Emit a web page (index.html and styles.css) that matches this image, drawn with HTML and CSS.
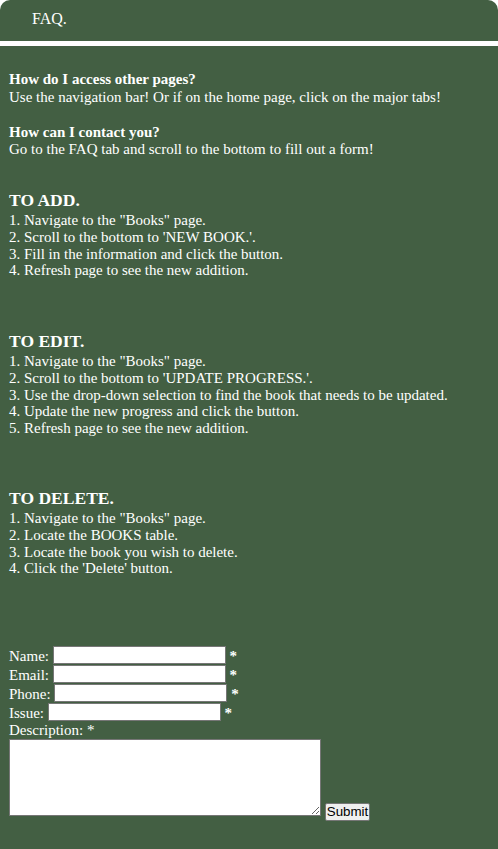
FILE: index.html
```html
<!DOCTYPE html>
<html>
<head>
<meta charset="utf-8">
<title>FAQ</title>
<link rel="stylesheet" href="styles.css">
</head>
<body>
<div class="header">FAQ.</div>
<div class="content">
  <div class="qa">
    <b>How do I access other pages?</b><br>
    Use the navigation bar! Or if on the home page, click on the major tabs!<br>
    <br>
    <b>How can I contact you?</b><br>
    Go to the FAQ tab and scroll to the bottom to fill out a form!
  </div>

  <div class="section add">
    <h3>TO ADD.</h3>
    1. Navigate to the "Books" page.<br>
    2. Scroll to the bottom to 'NEW BOOK.'.<br>
    3. Fill in the information and click the button.<br>
    4. Refresh page to see the new addition.
  </div>

  <div class="section edit">
    <h3>TO EDIT.</h3>
    1. Navigate to the "Books" page.<br>
    2. Scroll to the bottom to 'UPDATE PROGRESS.'.<br>
    3. Use the drop-down selection to find the book that needs to be updated.<br>
    4. Update the new progress and click the button.<br>
    5. Refresh page to see the new addition.
  </div>

  <div class="section delete">
    <h3>TO DELETE.</h3>
    1. Navigate to the "Books" page.<br>
    2. Locate the BOOKS table.<br>
    3. Locate the book you wish to delete.<br>
    4. Click the 'Delete' button.
  </div>

  <form class="contact">
    <div class="row">Name: <input type="text" class="field"> <span class="req">*</span></div>
    <div class="row">Email: <input type="text" class="field"> <span class="req">*</span></div>
    <div class="row">Phone: <input type="text" class="field"> <span class="req">*</span></div>
    <div class="row">Issue: <input type="text" class="field"> <span class="req">*</span></div>
    <div class="row label">Description: *</div>
    <div class="area-row"><textarea class="desc"></textarea> <button type="button" class="submit">Submit</button></div>
  </form>
</div>
</body>
</html>
```

FILE: styles.css
```css
html, body {
  margin: 0;
  padding: 0;
  background: #ffffff;
}
body {
  font-family: "Liberation Serif", "Times New Roman", serif;
  font-size: 15px;
  color: #ffffff;
}
.header {
  background: #435f43;
  height: 41px;
  box-sizing: border-box;
  padding: 9.5px 0 0 32px;
  border-radius: 10px 10px 0 0;
  font-size: 16px;
  line-height: 18px;
}
.content {
  background: #435f43;
  margin-top: 5px;
  padding: 25.1px 9px 30px 9px;
  line-height: 16.67px;
}
.qa {
  line-height: 17.5px;
}
.section h3 {
  font-size: 17.55px;
  line-height: 21px;
  margin: 0 0 1px 0;
  font-weight: bold;
}
.section.add {
  margin-top: 31.6px;
}
.section.edit {
  margin-top: 52.3px;
}
.section.delete {
  margin-top: 51.95px;
}
.contact {
  margin: 68.8px 0 0 0;
}
.row {
  height: 19px;
  line-height: 16.67px;
}
.row.label {
  height: 17px;
}
.field {
  width: 173px;
  height: 18px;
  box-sizing: border-box;
  border: 1px solid #767676;
  padding: 0 2px;
  margin: 0;
  background: #fff;
  vertical-align: text-bottom;
  font-family: "Liberation Sans", Arial, sans-serif;
  font-size: 13.33px;
}
.req {
  font-weight: bold;
}
.desc {
  width: 312px;
  height: 77px;
  box-sizing: border-box;
  border: 1px solid #767676;
  margin: 0;
  padding: 2px;
  resize: both;
  background: #fff;
  vertical-align: baseline;
}
.submit {
  font-family: "Liberation Sans", Arial, sans-serif;
  font-size: 13.33px;
  background: #efefef;
  border: 1px solid #767676;
  border-radius: 2px;
  padding: 0 1px;
  margin: 0;
  color: #000;
  height: 18px;
  line-height: 16px;
  vertical-align: baseline;
}
```
